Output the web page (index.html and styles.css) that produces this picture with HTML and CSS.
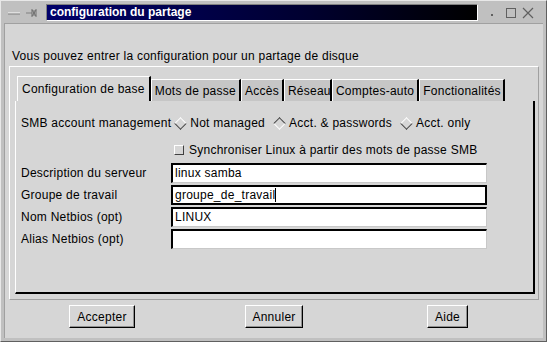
FILE: index.html
```html
<!DOCTYPE html>
<html lang="fr">
<head>
    <meta charset="UTF-8" />
    <title>configuration du partage</title>
    <link rel="stylesheet" href="styles.css">
</head>
<body>
    <div class="window">
        <div class="titlebar">
            <span class="tb-icon">
                <svg width="40" height="14" viewBox="0 0 40 14">
                    <path d="M7 7h12" stroke="#fff" stroke-width="1" />
                    <path d="M7 8h12" stroke="#808080" stroke-width="1" />
                    <path d="M25 7h6" stroke="#808080" />
                    <path d="M31 3v8M33 4v6M35 3v8M31 4l4 6M35 4l-4 6" stroke="#707070" fill="none" />
                </svg>
            </span>
            <div class="title">configuration du partage</div>
            <span class="tb-buttons">
                <svg width="56" height="14" viewBox="0 0 56 14">
                    <rect x="11" y="8" width="2" height="2" fill="#606060" />
                    <rect x="26.5" y="2.5" width="9" height="9" fill="none" stroke="#606060" />
                    <path d="M43 2l10 10M53 2l-10 10" stroke="#606060" stroke-width="1.2" />
                </svg>
            </span>
        </div>
        <div class="content">
            <p class="intro">Vous pouvez entrer la configuration pour un partage de disque</p>
            <div class="notebook">
                <div class="tabs">
                    <div class="tab active">Configuration de base</div>
                    <div class="tab">Mots de passe</div>
                    <div class="tab">Accès</div>
                    <div class="tab clip-reseau">Réseau</div>
                    <div class="tab">Comptes-auto</div>
                    <div class="tab clip-fonc">Fonctionalités</div>
                </div>
                <div class="page">
                    <div class="radio-row">
                        <span>SMB account management</span>
                        <span class="radio"><i class="diamond"></i>Not managed</span>
                        <span class="radio"><i class="diamond on"></i>Acct. &amp; passwords</span>
                        <span class="radio"><i class="diamond"></i>Acct. only</span>
                    </div>
                    <div class="check-row">
                        <span class="check"></span>Synchroniser Linux à partir des mots de passe SMB
                    </div>
                    <div class="fields">
                        <label>Description du serveur</label>
                        <div class="entry">linux samba</div>
                        <label>Groupe de travail</label>
                        <div class="entry focus">groupe_de_travail<span class="caret"></span></div>
                        <label>Nom Netbios (opt)</label>
                        <div class="entry">LINUX</div>
                        <label>Alias Netbios (opt)</label>
                        <div class="entry"></div>
                    </div>
                </div>
            </div>
            <div class="buttons">
                <button class="btn btn-ok">Accepter</button>
                <button class="btn btn-cancel">Annuler</button>
                <button class="btn btn-help">Aide</button>
            </div>
        </div>
    </div>
</body>
</html>
```

FILE: styles.css
```css
body {
    margin: 0;
    font-family: "Liberation Sans", Arial, sans-serif;
    font-size: 12px;
    letter-spacing: 0.25px;
    color: #000;
    background: #c0c0c0;
}

.window {
    width: 547px;
    height: 342px;
    box-sizing: border-box;
    background: #c0c0c0;
    border-top: 1px solid #e8e8e8;
    border-left: 1px solid #e8e8e8;
    border-right: 1px solid #606060;
    border-bottom: 1px solid #606060;
    display: flex;
    flex-direction: column;
}

.titlebar {
    height: 21px;
    display: flex;
    align-items: center;
    padding-top: 2px;
    box-sizing: border-box;
}

.tb-icon {
    width: 45px;
    display: flex;
}

.title {
    flex: 0 0 432px;
    height: 17px;
    box-sizing: border-box;
    border: 1px solid #fff;
    border-top-color: #808080;
    border-left-color: #808080;
    background: linear-gradient(to right, #00006a 0%, #000030 60%, #000 100%);
    color: #fff;
    font-weight: bold;
    font-size: 12px;
    letter-spacing: 0;
    line-height: 15px;
    padding-left: 3px;
}

.tb-buttons {
    display: flex;
    margin-left: 2px;
}

.content {
    flex: 1;
    margin: 1px 3px 3px 3px;
    background: #d6d6d6;
    border-top: 1px solid #a0a0a0;
    border-left: 1px solid #a0a0a0;
    display: flex;
    flex-direction: column;
}

.intro {
    margin: 25px 0 0 7px;
    line-height: 14px;
}

.notebook {
    margin: 3px 4px 0 4px;
    padding: 9px 5px 5px 5px;
    border: 1px solid #fff;
    border-right-color: #a0a0a0;
    border-bottom-color: #a0a0a0;
    height: 234px;
    box-sizing: border-box;
    display: flex;
    flex-direction: column;
}

.tabs {
    display: flex;
    align-items: flex-end;
    padding-left: 2px;
    height: 25px;
}

.tab {
    height: 22px;
    line-height: 22px;
    padding: 0 3px;
    background: #c6c6c6;
    border-top: 1px solid #fff;
    border-left: 1px solid #fff;
    border-right: 2px solid #000;
    box-sizing: border-box;
    white-space: nowrap;
    overflow: hidden;
}

.tab.active {
    height: 25px;
    line-height: 25px;
    background: #d6d6d6;
    padding: 0 4px;
}

.clip-reseau {
    width: 48px;
}

.clip-fonc {
    width: 86px;
}

.page {
    flex: 1;
    width: 520px;
    border-left: 1px solid #fff;
    border-right: 2px solid #000;
    border-bottom: 2px solid #000;
    box-sizing: border-box;
    padding: 14px 0 0 5px;
}

.radio-row {
    display: flex;
    align-items: center;
    height: 16px;
}

.radio {
    display: flex;
    align-items: center;
    margin-left: 4px;
}

.radio + .radio {
    margin-left: 9px;
}

.diamond {
    width: 7px;
    height: 7px;
    margin: 0 5px 0 1px;
    transform: rotate(45deg);
    border-top: 1px solid #fff;
    border-left: 1px solid #fff;
    border-right: 1px solid #404040;
    border-bottom: 1px solid #404040;
    background: #d6d6d6;
}

.diamond.on {
    border-top-color: #404040;
    border-left-color: #404040;
    border-right-color: #fff;
    border-bottom-color: #fff;
}

.check-row {
    display: flex;
    align-items: center;
    margin: 11px 0 0 153px;
    height: 16px;
}

.check {
    width: 8px;
    height: 8px;
    margin-right: 5px;
    border-top: 1px solid #fff;
    border-left: 1px solid #fff;
    border-right: 1px solid #404040;
    border-bottom: 1px solid #404040;
    background: #d6d6d6;
}

.fields {
    display: grid;
    grid-template-columns: 150px 316px;
    grid-auto-rows: 22px;
    margin-top: 4px;
    align-items: center;
}

.entry {
    height: 20px;
    box-sizing: border-box;
    background: #fff;
    border-top: 2px solid #000;
    border-left: 2px solid #000;
    border-right: 1px solid #c8c8c8;
    border-bottom: 1px solid #c8c8c8;
    padding-left: 2px;
    line-height: 17px;
}

.entry.focus {
    border: 2px solid #000;
    line-height: 16px;
}

.caret {
    display: inline-block;
    width: 1px;
    height: 14px;
    background: #000;
    vertical-align: -3px;
}

.buttons {
    display: flex;
    padding-top: 5px;
}

.btn {
    font: inherit;
    letter-spacing: 0.25px;
    height: 23px;
    padding: 0;
    background: #d6d6d6;
    border-top: 1px solid #fff;
    border-left: 1px solid #fff;
    border-right: 1px solid #000;
    border-bottom: 1px solid #000;
    box-shadow: inset -1px -1px 0 #909090;
}

.btn-ok {
    width: 66px;
    margin-left: 64px;
}

.btn-cancel {
    width: 58px;
    margin-left: 110px;
}

.btn-help {
    width: 41px;
    margin-left: 124px;
}
```
